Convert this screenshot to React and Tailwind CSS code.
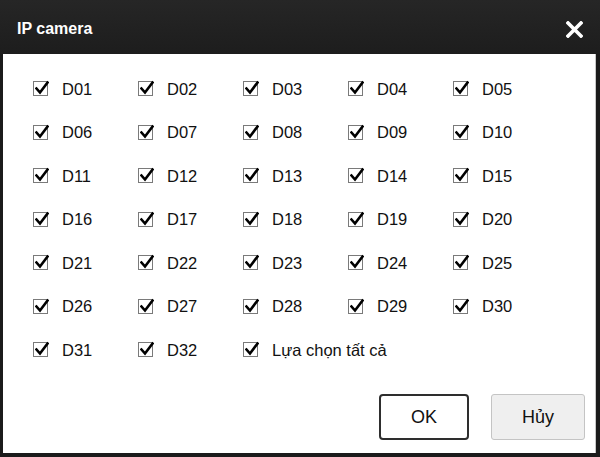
import React from "react";

function Check() {
  return (
    <span className="relative inline-block w-[15px] h-[15px] border border-[#7a7a7a] bg-white shrink-0">
      <svg className="absolute left-[1px] top-[-2px]" width="14" height="16" viewBox="0 0 14 16">
        <path d="M1.5 8.5 L5 12.5 L12.5 2.5" fill="none" stroke="#000" strokeWidth="2.6" strokeLinecap="square" strokeLinejoin="miter" />
      </svg>
    </span>
  );
}

function Item({ label }) {
  return (
    <div className="flex items-center gap-[14px] h-[43.5px]">
      <Check />
      <span className="text-[16.5px] text-[#111] leading-none">{label}</span>
    </div>
  );
}

export default function App() {
  const ids = Array.from({ length: 32 }, (_, i) => "D" + String(i + 1).padStart(2, "0"));
  return (
    <div
      className="w-[600px] h-[457px] bg-[#1b1b1b] flex flex-col"
      style={{ fontFamily: '"Liberation Sans", Arial, sans-serif' }}
    >
      <div className="h-[54px] shrink-0 flex items-center justify-between pl-[17px] pr-[17px] pt-[4px] bg-gradient-to-b from-[#262626] to-[#1d1d1d]">
        <span className="text-white font-bold text-[16px]">IP camera</span>
        <svg width="17" height="17" viewBox="0 0 17 17">
          <path d="M2 2 L15 15 M15 2 L2 15" stroke="#fff" strokeWidth="3.6" strokeLinecap="square" />
        </svg>
      </div>
      <div className="flex-1 ml-[3px] mr-[4px] mb-[4px] bg-white border-r border-[#c8c8c8] flex flex-col">
        <div className="pl-[30px] pt-[13px] grid grid-cols-[repeat(5,105px)]">
          {ids.map((id) => (
            <Item key={id} label={id} />
          ))}
          <div className="col-span-2">
            <Item label="Lựa chọn tất cả" />
          </div>
        </div>
        <div className="mt-auto flex justify-end gap-[22px] pr-[10px] pb-[13px]">
          <button className="w-[90px] h-[46px] border-2 border-[#2e2e2e] rounded-[4px] bg-white text-[18px] text-[#111]">
            OK
          </button>
          <button className="w-[94px] h-[46px] border border-[#c4c4c4] rounded-[3px] bg-[#efefef] text-[18px] text-[#111]">
            Hủy
          </button>
        </div>
      </div>
    </div>
  );
}
